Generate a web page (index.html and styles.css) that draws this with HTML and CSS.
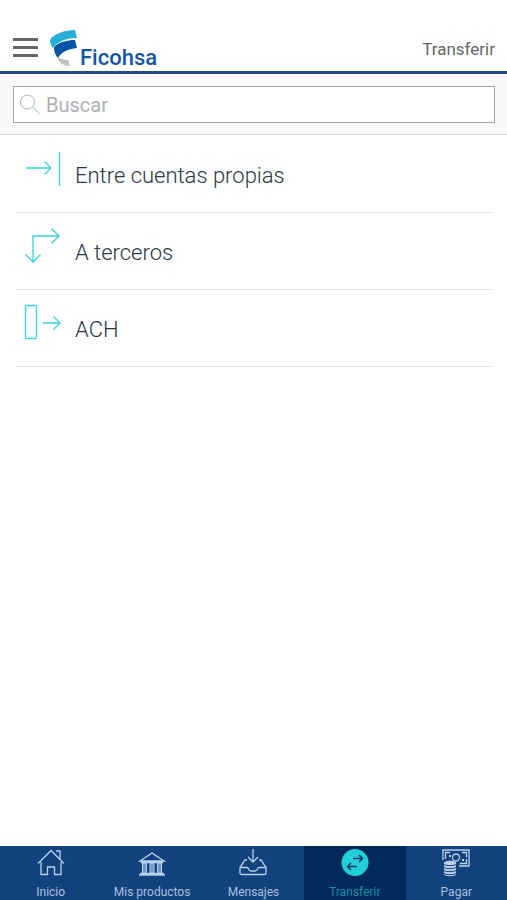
FILE: index.html
```html
<!DOCTYPE html>
<html lang="es">
<head>
<meta charset="utf-8">
<meta name="viewport" content="width=device-width, initial-scale=1">
<title>Ficohsa - Transferir</title>
<link rel="stylesheet" href="styles.css">
</head>
<body>
<header class="header">
  <button class="menu" type="button" aria-label="Menú"><span></span><span></span><span></span></button>
  <a class="brand" href="#">
    <svg width="28" height="38" viewBox="0 0 28 38" aria-hidden="true">
      <path fill="#26b0d8" d="M25 1C15 1 3 5 0 11C0 14 1 17 3 19C8 12 17 9 27 9Z"/>
      <path fill="#0654a8" d="M25 11C17 11 9 13 4 18C4 22 5 26 8 29C11 23 18 20 27 19Z"/>
      <path fill="#bfc0c2" d="M8 28C11 30 14 31 18 31L20 37C14 37 7 33 8 28Z"/>
    </svg>
    <span class="brand-name">Ficohsa</span>
  </a>
  <h1 class="title">Transferir</h1>
</header>
<form class="search" role="search">
  <label class="field">
    <svg width="22" height="22" viewBox="0 0 22 22" fill="none" stroke="#b4b4b4" aria-hidden="true"><circle cx="7.500" cy="8" r="7"/><path d="M12.500 13L20 20"/></svg>
    <input type="search" placeholder="Buscar" aria-label="Buscar">
  </label>
</form>
<main class="options">
  <a class="option" href="#">
    <svg width="38" height="38" viewBox="0 0 38 38" aria-hidden="true"><path d="M2 19H27M20.500 12.500L27 19L20.500 25.500M35.500 3V37"/></svg>
    <span>Entre cuentas propias</span>
  </a>
  <a class="option" href="#">
    <svg width="38" height="38" viewBox="0 0 38 38" aria-hidden="true"><path d="M9 35V10H35M27.500 2.500L35 10L27.500 17.500M1.500 28.500L9 36L16.500 28.500"/></svg>
    <span>A terceros</span>
  </a>
  <a class="option" href="#">
    <svg width="38" height="38" viewBox="0 0 38 38" aria-hidden="true"><rect x="1.500" y="2.500" width="11" height="33" rx="1"/><path d="M19 20H36M29.500 13.500L36 20L29.500 26.500"/></svg>
    <span>ACH</span>
  </a>
</main>
<nav class="tabs">
  <a class="tab" href="#">
    <svg width="28" height="28" viewBox="0 0 28 28" aria-hidden="true"><path d="M1 14.500L14 1.500L27 14.500M19 2H23V10M4 13V25.500H10.500V18H17.500V25.500H24V13"/></svg>
    <span>Inicio</span>
  </a>
  <a class="tab" href="#">
    <svg width="28" height="28" viewBox="0 0 28 28" aria-hidden="true"><path d="M2 12L14 4L26 12ZM1 26H27M2 24.500H26M3 13.500H25"/><path class="pillar" d="M4.500 14H8.500V24H4.500ZM12 14H16V24H12ZM19.500 14H23.500V24H19.500Z"/></svg>
    <span>Mis productos</span>
  </a>
  <a class="tab" href="#">
    <svg width="28" height="28" viewBox="0 0 28 28" aria-hidden="true"><path d="M14 0V13M9 8L14 13L19 8M8 11H6L1 18.500V24Q1 25.500 2.500 25.500H25.500Q27 25.500 27 24V18.500L22 11H20M1 18.500H8C10 18.500 9 22 12 22H16C19 22 18 18.500 20 18.500H27"/></svg>
    <span>Mensajes</span>
  </a>
  <a class="tab active" href="#" aria-current="page">
    <svg width="28" height="28" viewBox="0 0 28 28" aria-hidden="true"><circle cx="14" cy="13.500" r="13.500"/><path d="M12 9.500H21.500M18 6L21.500 9.500L18 13M16 17.500H6.500M10 14L6.500 17.500L10 21"/></svg>
    <span>Transferir</span>
  </a>
  <a class="tab" href="#">
    <svg width="28" height="28" viewBox="0 0 28 28" aria-hidden="true"><path d="M1 11V1H27V17H17M3.500 10V3.500H8M20 3.500H24.500V8M24.500 10V14.500H18"/><circle cx="14" cy="8.500" r="3.500"/><path class="fill" d="M7 6H9V8H7ZM20 10H22V12H20Z"/><path class="fill" d="M2 14C2 11 14 11 14 14V25C14 28 2 28 2 25Z"/><path class="coin" d="M2 15.500C4 17 12 17 14 15.500M2 18.500C4 20 12 20 14 18.500M2 21.500C4 23 12 23 14 21.500M2 24.500C4 26 12 26 14 24.500"/></svg>
    <span>Pagar</span>
  </a>
</nav>
</body>
</html>
```
FILE: styles.css
```css
* { box-sizing: border-box; }

body {
  margin: 0;
  min-height: 100vh;
  display: flex;
  flex-direction: column;
  background: #fff;
  color: #3d4654;
  font-family: Roboto, "Liberation Sans", sans-serif;
}

a { color: inherit; text-decoration: none; }
svg { display: block; flex: none; }

.header {
  display: flex;
  align-items: flex-end;
  height: 74px;
  padding: 0 12px 4px 13px;
  border-bottom: 3px solid #214c89;
}

.menu {
  display: flex;
  flex-direction: column;
  gap: 5px;
  width: 25px;
  margin: 0 12px 10px 0;
  padding: 0;
  border: 0;
  background: none;
}
.menu span { height: 3px; width: 100%; background: #666; }

.brand { display: flex; align-items: flex-end; gap: 2px; }
.brand-name {
  color: #1456a5;
  font-size: 22px;
  font-weight: 500;
  line-height: 18px;
}

.title {
  margin: 0 0 8px auto;
  color: #666;
  font-size: 17px;
  font-weight: 400;
  line-height: 20px;
}

.search {
  padding: 12px 12px 11px 13px;
  border-bottom: 1px solid #dcdcdc;
  background: #f9f9f9;
}
.field {
  display: flex;
  align-items: center;
  gap: 4px;
  height: 37px;
  padding: 0 6px;
  border: 1px solid #a6a6a6;
  background: #fff;
}
.field input {
  flex: 1;
  min-width: 0;
  padding: 0;
  border: 0;
  outline: 0;
  background: none;
  color: #3d4654;
  font: 20px/24px Roboto, "Liberation Sans", sans-serif;
}
.field input::placeholder { color: #b0b0b0; opacity: 1; }

.options { flex: 1; padding: 1px 15px 0 16px; }
.option {
  display: flex;
  align-items: flex-start;
  gap: 13px;
  height: 77px;
  padding: 13px 0 0 8px;
  border-bottom: 1px solid #e3e3e3;
  color: #2c3645;
  font-size: 22px;
  font-weight: 300;
  line-height: 26px;
}
.option svg { fill: none; stroke: #3ad4de; stroke-width: 1.3; }
.option span { padding-top: 14px; }

.tabs {
  display: grid;
  grid-template-columns: repeat(5, 1fr);
  background: #13437f;
  color: #a9bfdd;
  font-size: 12px;
  line-height: 14px;
}
.tab {
  display: flex;
  flex-direction: column;
  align-items: center;
  gap: 8px;
  height: 54px;
  padding-top: 3px;
}
.tab svg { fill: none; stroke: #b9d1ec; stroke-width: 1.3; }
.tab .fill { fill: #b9d1ec; stroke: none; }
.tab .pillar { fill: #6f95c4; stroke-width: 1; }
.tab .coin { stroke: #13437f; stroke-width: 1; }
.tab.active { background: #01295b; color: #138fa5; }
.active svg { stroke: #063765; stroke-width: 1.5; }
.active circle { fill: #20cfd8; stroke: none; }
```
